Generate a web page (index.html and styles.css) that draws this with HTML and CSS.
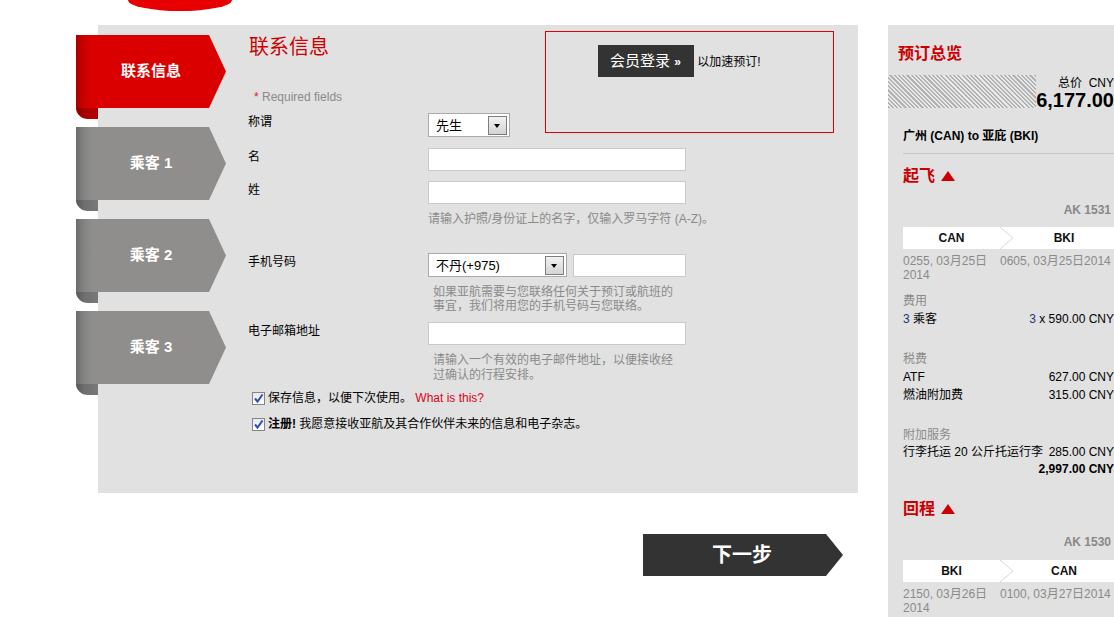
FILE: index.html
```html
<!DOCTYPE html>
<html lang="zh-CN">
<head>
    <meta charset="UTF-8">
    <title>联系信息</title>
    <link rel="stylesheet" href="styles.css">
</head>
<body>
    <div class="page">
        <div class="main">
            <div class="header">
                <div class="logo"></div>
            </div>
            <div class="panel">
                <div class="tabs">
                    <div class="tab active"><div class="tab-face">联系信息</div></div>
                    <div class="tab"><div class="tab-face">乘客 1</div></div>
                    <div class="tab"><div class="tab-face">乘客 2</div></div>
                    <div class="tab"><div class="tab-face">乘客 3</div></div>
                </div>
                <div class="form">
                    <div class="login-box">
                        <span class="login-btn">会员登录 <span class="raquo">»</span></span>
                        <span class="login-note">以加速预订!</span>
                    </div>
                    <h1>联系信息</h1>
                    <p class="required"><span class="star">*</span> Required fields</p>

                    <div class="row row-title">
                        <label>称谓</label>
                        <div class="select select-title">先生<span class="arrow"></span></div>
                    </div>
                    <div class="row row-first">
                        <label>名</label>
                        <div class="input"></div>
                    </div>
                    <div class="row row-last">
                        <label>姓</label>
                        <div class="input"></div>
                    </div>
                    <p class="hint hint-name">请输入护照/身份证上的名字，仅输入罗马字符 (A-Z)。</p>

                    <div class="row row-phone">
                        <label>手机号码</label>
                        <div class="select select-country">不丹(+975)<span class="arrow"></span></div>
                        <div class="input input-phone"></div>
                    </div>
                    <p class="hint hint-phone">如果亚航需要与您联络任何关于预订或航班的事宜，我们将用您的手机号码与您联络。</p>

                    <div class="row row-email">
                        <label>电子邮箱地址</label>
                        <div class="input"></div>
                    </div>
                    <p class="hint hint-email">请输入一个有效的电子邮件地址，以便接收经过确认的行程安排。</p>

                    <div class="check check-save">
                        <span class="box"><svg width="11" height="11" viewBox="0 0 11 11"><path d="M2 5.5 L4.5 8.5 L9.5 1.5" fill="none" stroke="#2b4fb8" stroke-width="2"/></svg></span>
                        <span class="check-text">保存信息，以便下次使用。 <a class="what">What is this?</a></span>
                    </div>
                    <div class="check check-news">
                        <span class="box"><svg width="11" height="11" viewBox="0 0 11 11"><path d="M2 5.5 L4.5 8.5 L9.5 1.5" fill="none" stroke="#2b4fb8" stroke-width="2"/></svg></span>
                        <span class="check-text"><b>注册!</b> 我愿意接收亚航及其合作伙伴未来的信息和电子杂志。</span>
                    </div>
                </div>
            </div>
            <div class="next-btn">下一步</div>
        </div>

        <div class="sidebar">
            <h2>预订总览</h2>
            <div class="total">
                <div class="hatch"></div>
                <div class="price">
                    <div class="price-label">总价 &nbsp;CNY</div>
                    <div class="price-value">6,177.00</div>
                </div>
            </div>
            <div class="section">
                <div class="route">广州 (CAN) to 亚庇 (BKI)</div>

                <h3 class="leg-title leg-out">起飞 <span class="tri"></span></h3>
                <div class="flight-no">AK 1531</div>
                <div class="leg-bar">
                    <span>CAN</span>
                    <svg width="14" height="22" viewBox="0 0 14 22"><polyline points="0,0 13,11 0,22" fill="none" stroke="#d8d8d8" stroke-width="1"/></svg>
                    <span>BKI</span>
                </div>
                <div class="leg-times">
                    <span>0255, 03月25日 2014</span>
                    <span class="nowrap">0605, 03月25日2014</span>
                </div>

                <div class="fee-group fee-fare">
                    <div class="fee-head">费用</div>
                    <div class="fee-row"><span><span class="num">3</span> 乘客</span><span><span class="num">3</span> x 590.00 CNY</span></div>
                </div>
                <div class="fee-group fee-tax">
                    <div class="fee-head">税费</div>
                    <div class="fee-row"><span>ATF</span><span>627.00 CNY</span></div>
                    <div class="fee-row"><span>燃油附加费</span><span>315.00 CNY</span></div>
                </div>
                <div class="fee-group fee-extra">
                    <div class="fee-head">附加服务</div>
                    <div class="fee-row"><span>行李托运 20 公斤托运行李</span><span>285.00 CNY</span></div>
                    <div class="fee-sum">2,997.00 CNY</div>
                </div>

                <h3 class="leg-title leg-back">回程 <span class="tri"></span></h3>
                <div class="flight-no flight-back">AK 1530</div>
                <div class="leg-bar leg-bar-back">
                    <span>BKI</span>
                    <svg width="14" height="22" viewBox="0 0 14 22"><polyline points="0,0 13,11 0,22" fill="none" stroke="#d8d8d8" stroke-width="1"/></svg>
                    <span>CAN</span>
                </div>
                <div class="leg-times">
                    <span>2150, 03月26日 2014</span>
                    <span class="nowrap">0100, 03月27日2014</span>
                </div>
            </div>
        </div>
    </div>
</body>
</html>
```

FILE: styles.css
```css
body {
    margin: 0;
    background: #ffffff;
    font-family: "Liberation Sans", Arial, "Noto Sans CJK SC", sans-serif;
    font-size: 12px;
    color: #000;
    overflow: hidden;
}

.page {
    display: flex;
    align-items: flex-start;
}

/* 左侧主区域 */
.main {
    margin-left: 98px;
    width: 760px;
}

.header {
    height: 25px;
}

.logo {
    margin-left: 30px;
    width: 104px;
    height: 11px;
    background: #e80000;
    border-radius: 0 0 50% 50% / 0 0 100% 100%;
}

.panel {
    background: #e1e1e1;
    height: 468px;
    display: flex;
    padding-top: 6px;
    box-sizing: border-box;
}

/* 左边的丝带标签 */
.tabs {
    margin-left: -22px;
    margin-top: 4px;
    width: 150px;
    flex-shrink: 0;
}

.tab {
    position: relative;
    width: 150px;
    height: 73px;
    margin-bottom: 19px;
}

.tab::before {
    content: '';
    position: absolute;
    left: 0;
    top: 50px;
    width: 22px;
    height: 34px;
    border-bottom-left-radius: 12px 11px;
    background: linear-gradient(to right, #585858 0, #6e6e6e 8px, #7a7a7a 22px);
}

.tab-face {
    position: relative;
    height: 73px;
    line-height: 71px;
    text-align: center;
    color: #fff;
    font-weight: bold;
    font-size: 15px;
    background: linear-gradient(to right, #6a6a6a 0, #7c7c7c 5px, #868684 10px, #8f8e8c 16px, #8f8e8c 100%);
    clip-path: polygon(0 0, 133px 0, 150px 50%, 133px 100%, 0 100%);
}

.tab.active::before {
    background: linear-gradient(to right, #8a0000 0, #a80000 8px, #b80000 22px);
}

.tab.active .tab-face {
    background: linear-gradient(to right, #a30000 0, #c00000 5px, #d00000 10px, #da0000 16px, #da0000 100%);
}

/* 表单 */
.form {
    margin-left: 22px;
    width: 586px;
}

.login-box {
    float: right;
    width: 289px;
    height: 102px;
    border: 1px solid #e00000;
    padding: 13px 0 0 52px;
    box-sizing: border-box;
}

.login-btn {
    display: inline-block;
    background: #333333;
    color: #fff;
    font-size: 15px;
    height: 32px;
    line-height: 32px;
    padding: 0 13px 0 12px;
}

.raquo {
    font-size: 12px;
    font-weight: bold;
}

.login-note {
    font-size: 12px;
}

h1 {
    margin: 4px 0 0 1px;
    font-size: 20px;
    line-height: 24px;
    font-weight: normal;
    color: #cc0000;
}

.required {
    margin: 30px 0 0 6px;
    line-height: 16px;
    color: #8a8a8a;
}

.star {
    color: #d22;
}

.row {
    display: flex;
    align-items: flex-start;
}

.row label {
    width: 180px;
    line-height: 18px;
    flex-shrink: 0;
}

.row-title { margin-top: 8px; }
.row-first { margin-top: 11px; }
.row-last { margin-top: 10px; }
.row-phone { margin-top: 26px; }
.row-email { margin-top: 9px; }

.input {
    width: 258px;
    height: 23px;
    background: #fff;
    border: 1px solid #c9c9c9;
    box-sizing: border-box;
}

.input-phone {
    width: 113px;
    margin-left: 6px;
    margin-top: 1px;
}

.select {
    position: relative;
    height: 24px;
    line-height: 24px;
    background: #fff;
    border: 1px solid #a9a9a9;
    box-sizing: border-box;
    padding-left: 7px;
    font-size: 13px;
}

.select-title { width: 82px; }
.select-country { width: 139px; }

.arrow {
    position: absolute;
    right: 2px;
    top: 2px;
    width: 17px;
    height: 17px;
    border: 1px solid #7d7d7d;
    background: linear-gradient(#f2f2f2, #d4d4d4);
}

.arrow::after {
    content: '';
    position: absolute;
    left: 5px;
    top: 7px;
    border-left: 3.5px solid transparent;
    border-right: 3.5px solid transparent;
    border-top: 4px solid #000;
}

.hint {
    color: #8a8a8a;
    margin: 0 0 0 180px;
}

.hint-name {
    margin-top: 7px;
    line-height: 16px;
    white-space: nowrap;
}

.hint-phone {
    margin-top: 8px;
    line-height: 14px;
    width: 242px;
    padding-left: 5px;
}

.hint-email {
    margin-top: 8px;
    line-height: 15px;
    width: 242px;
    padding-left: 5px;
}

.check {
    display: flex;
    align-items: center;
    margin-left: 4px;
    line-height: 18px;
}

.check-save { margin-top: 6px; }
.check-news { margin-top: 8px; }

.check-text {
    white-space: nowrap;
}

.box {
    width: 13px;
    height: 13px;
    box-sizing: border-box;
    border: 1px solid #858585;
    background: linear-gradient(#e8e8e8, #ffffff);
    margin-right: 3px;
    display: flex;
    align-items: center;
    justify-content: center;
    flex-shrink: 0;
}

.what {
    color: #e00020;
}

.next-btn {
    margin: 41px 0 0 545px;
    width: 200px;
    height: 42px;
    line-height: 42px;
    text-align: center;
    background: #333333;
    color: #fff;
    font-size: 20px;
    font-weight: bold;
    clip-path: polygon(0 0, 183px 0, 200px 50%, 183px 100%, 0 100%);
    text-indent: -2px;
}

/* 右侧预订总览 */
.sidebar {
    margin-left: 30px;
    margin-top: 25px;
    width: 226px;
    min-height: 600px;
    background: #e1e1e1;
    padding-top: 19px;
    overflow: hidden;
}

h2 {
    margin: 0 0 0 10px;
    font-size: 16px;
    line-height: 20px;
    color: #cc0000;
}

.total {
    display: flex;
    margin-top: 11px;
}

.hatch {
    width: 148px;
    height: 33px;
    flex-shrink: 0;
    background: repeating-linear-gradient(45deg, #b2b2b2 0, #b2b2b2 1.5px, #e9e9e9 1.5px, #e9e9e9 3px);
}

.price {
    width: 78px;
    text-align: right;
    flex-shrink: 0;
}

.price-label {
    line-height: 16px;
    color: #000;
}

.price-value {
    font-size: 20px;
    font-weight: bold;
    line-height: 22px;
    margin-top: -2px;
}

.section {
    padding-left: 15px;
}

.route {
    margin-top: 17px;
    line-height: 16px;
    font-weight: bold;
    padding-bottom: 9px;
    border-bottom: 1px solid #c6c6c6;
}

.leg-title {
    margin: 12px 0 0;
    font-size: 16px;
    line-height: 20px;
    color: #cc0000;
    display: flex;
    align-items: center;
}

.tri {
    display: inline-block;
    margin-left: 6px;
    border-left: 7px solid transparent;
    border-right: 7px solid transparent;
    border-bottom: 10px solid #cc0000;
}

.flight-no {
    margin-top: 16px;
    text-align: right;
    color: #888;
    font-weight: bold;
    line-height: 16px;
    padding-right: 3px;
}

.leg-bar {
    display: grid;
    grid-template-columns: 97px 14px 1fr;
    margin-top: 9px;
    height: 22px;
    background: #fff;
    line-height: 22px;
    font-weight: bold;
    color: #111;
    text-align: center;
}

.leg-times {
    display: grid;
    grid-template-columns: 97px 1fr;
    margin-top: 5px;
    line-height: 14px;
    color: #8a8a8a;
}

.nowrap {
    white-space: nowrap;
}

.fee-group {
    line-height: 18px;
}

.fee-fare { margin-top: 10px; }
.fee-tax { margin-top: 22px; }
.fee-extra { margin-top: 23px; line-height: 17px; }

.fee-head {
    color: #8a8a8a;
}

.fee-row {
    display: flex;
    justify-content: space-between;
    white-space: nowrap;
}

.num {
    color: #22367a;
}

.fee-sum {
    text-align: right;
    font-weight: bold;
}

.leg-back {
    margin-top: 21px;
}

.flight-back {
    margin-top: 15px;
}

.leg-bar-back {
    margin-top: 10px;
}
```
